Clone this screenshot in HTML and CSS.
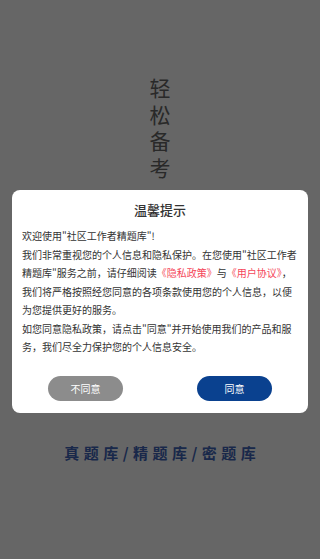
FILE: index.html
```html
<!DOCTYPE html>
<html lang="zh-CN">
<head>
<meta charset="utf-8">
<title>社区工作者精题库</title>
<link rel="stylesheet" href="styles.css">
</head>
<body>
<div class="page">
  <h1 class="slogan">轻松备考</h1>
  <p class="tagline">真题库/精题库/密题库</p>
</div>
<div class="overlay">
  <div class="dialog">
    <h2 class="dialog-title">温馨提示</h2>
    <p class="dialog-body">欢迎使用"社区工作者精题库"!<br>我们非常重视您的个人信息和隐私保护。在您使用"社区工作者<br>精题库"服务之前，请仔细阅读<a class="link">《隐私政策》</a>与<a class="link">《用户协议》</a>，<br>我们将严格按照经您同意的各项条款使用您的个人信息，以便<br>为您提供更好的服务。<br>如您同意隐私政策，请点击"同意"并开始使用我们的产品和服<br>务，我们尽全力保护您的个人信息安全。</p>
    <div class="dialog-actions">
      <button class="btn btn-decline">不同意</button>
      <button class="btn btn-accept">同意</button>
    </div>
  </div>
</div>
</body>
</html>
```
FILE: styles.css
```css
* { box-sizing: border-box; }
html, body {
  margin: 0;
  padding: 0;
  background: #ffffff;
  font-family: "Noto Sans CJK SC", "Noto Sans", sans-serif;
}
.page {
  height: 559px;
  display: flex;
  flex-direction: column;
  align-items: center;
  padding-top: 78px;
}
.slogan {
  margin: 0;
  writing-mode: vertical-rl;
  font-size: 21px;
  font-weight: 400;
  line-height: 26px;
  letter-spacing: 5.5px;
  color: #666666;
}
.tagline {
  margin: 259px 0 0 0;
  font-size: 15px;
  font-weight: 700;
  letter-spacing: 4.5px;
  line-height: 20px;
  color: #3f65b8;
  padding-left: 4.5px;
}
.overlay {
  position: fixed;
  inset: 0;
  background: rgba(0, 0, 0, 0.6);
  padding: 190px 12px 0;
}
.dialog {
  background: #ffffff;
  border-radius: 8px;
  padding: 10px 10px 12px;
}
.dialog-title {
  margin: 0;
  text-align: center;
  font-size: 13px;
  font-weight: 500;
  line-height: 20px;
  color: #333333;
}
.dialog-body {
  margin: 7px 0 0 0;
  font-size: 10px;
  line-height: 18.5px;
  color: #333333;
  white-space: nowrap;
}
.link { color: #f5475a; }
.dialog-actions {
  margin-top: 19.5px;
  display: flex;
  justify-content: space-between;
  padding: 0 26px;
}
.btn {
  width: 75px;
  height: 25px;
  border: none;
  border-radius: 13px;
  color: #ffffff;
  font-family: inherit;
  font-size: 10px;
  padding: 0;
}
.btn-decline { background: #8c8c8c; }
.btn-accept { background: #0a418f; }
```
